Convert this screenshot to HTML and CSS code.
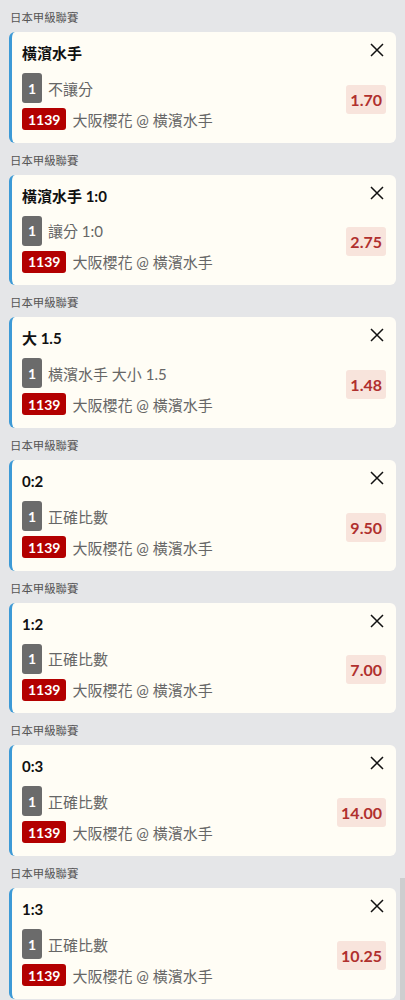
FILE: index.html
```html
<!DOCTYPE html>
<html lang="zh-Hant">
<head>
  <meta charset="UTF-8" />
  <meta name="viewport" content="width=device-width, initial-scale=1" />
  <title>投注單</title>
  <link rel="stylesheet" href="styles.css">
</head>
<body>

  <div class="slip">

    <div class="league">日本甲級聯賽</div>
    <div class="bet">
      <div class="bet-top">
        <div class="bet-title">橫濱水手</div>
        <svg class="close" width="14" height="14" viewBox="0 0 14 14"><path d="M1 1L13 13M13 1L1 13" stroke="#111" stroke-width="1.5" fill="none"/></svg>
      </div>
      <div class="bet-body">
        <div class="bet-info">
          <div class="row"><span class="num">1</span><span class="txt">不讓分</span></div>
          <div class="row"><span class="code">1139</span><span class="txt">大阪櫻花 @ 橫濱水手</span></div>
        </div>
        <div class="odds">1.70</div>
      </div>
    </div>

    <div class="league">日本甲級聯賽</div>
    <div class="bet">
      <div class="bet-top">
        <div class="bet-title">橫濱水手 1:0</div>
        <svg class="close" width="14" height="14" viewBox="0 0 14 14"><path d="M1 1L13 13M13 1L1 13" stroke="#111" stroke-width="1.5" fill="none"/></svg>
      </div>
      <div class="bet-body">
        <div class="bet-info">
          <div class="row"><span class="num">1</span><span class="txt">讓分 1:0</span></div>
          <div class="row"><span class="code">1139</span><span class="txt">大阪櫻花 @ 橫濱水手</span></div>
        </div>
        <div class="odds">2.75</div>
      </div>
    </div>

    <div class="league">日本甲級聯賽</div>
    <div class="bet">
      <div class="bet-top">
        <div class="bet-title">大 1.5</div>
        <svg class="close" width="14" height="14" viewBox="0 0 14 14"><path d="M1 1L13 13M13 1L1 13" stroke="#111" stroke-width="1.5" fill="none"/></svg>
      </div>
      <div class="bet-body">
        <div class="bet-info">
          <div class="row"><span class="num">1</span><span class="txt">橫濱水手 大小 1.5</span></div>
          <div class="row"><span class="code">1139</span><span class="txt">大阪櫻花 @ 橫濱水手</span></div>
        </div>
        <div class="odds">1.48</div>
      </div>
    </div>

    <div class="league">日本甲級聯賽</div>
    <div class="bet">
      <div class="bet-top">
        <div class="bet-title">0:2</div>
        <svg class="close" width="14" height="14" viewBox="0 0 14 14"><path d="M1 1L13 13M13 1L1 13" stroke="#111" stroke-width="1.5" fill="none"/></svg>
      </div>
      <div class="bet-body">
        <div class="bet-info">
          <div class="row"><span class="num">1</span><span class="txt">正確比數</span></div>
          <div class="row"><span class="code">1139</span><span class="txt">大阪櫻花 @ 橫濱水手</span></div>
        </div>
        <div class="odds">9.50</div>
      </div>
    </div>

    <div class="league">日本甲級聯賽</div>
    <div class="bet">
      <div class="bet-top">
        <div class="bet-title">1:2</div>
        <svg class="close" width="14" height="14" viewBox="0 0 14 14"><path d="M1 1L13 13M13 1L1 13" stroke="#111" stroke-width="1.5" fill="none"/></svg>
      </div>
      <div class="bet-body">
        <div class="bet-info">
          <div class="row"><span class="num">1</span><span class="txt">正確比數</span></div>
          <div class="row"><span class="code">1139</span><span class="txt">大阪櫻花 @ 橫濱水手</span></div>
        </div>
        <div class="odds">7.00</div>
      </div>
    </div>

    <div class="league">日本甲級聯賽</div>
    <div class="bet">
      <div class="bet-top">
        <div class="bet-title">0:3</div>
        <svg class="close" width="14" height="14" viewBox="0 0 14 14"><path d="M1 1L13 13M13 1L1 13" stroke="#111" stroke-width="1.5" fill="none"/></svg>
      </div>
      <div class="bet-body">
        <div class="bet-info">
          <div class="row"><span class="num">1</span><span class="txt">正確比數</span></div>
          <div class="row"><span class="code">1139</span><span class="txt">大阪櫻花 @ 橫濱水手</span></div>
        </div>
        <div class="odds">14.00</div>
      </div>
    </div>

    <div class="league">日本甲級聯賽</div>
    <div class="bet">
      <div class="bet-top">
        <div class="bet-title">1:3</div>
        <svg class="close" width="14" height="14" viewBox="0 0 14 14"><path d="M1 1L13 13M13 1L1 13" stroke="#111" stroke-width="1.5" fill="none"/></svg>
      </div>
      <div class="bet-body">
        <div class="bet-info">
          <div class="row"><span class="num">1</span><span class="txt">正確比數</span></div>
          <div class="row"><span class="code">1139</span><span class="txt">大阪櫻花 @ 橫濱水手</span></div>
        </div>
        <div class="odds">10.25</div>
      </div>
    </div>

  </div>

  <!-- scroll thumb -->
  <div class="scroll-thumb"></div>

</body>
</html>
```

FILE: styles.css
```css
body {
  margin: 0;
  background: #e5e6e8;
  font-family: Lato, "Noto Sans CJK TC", sans-serif;
  color: #111;
}

.slip {
  padding: 0 9px;
}

/* league header */
.league {
  font-size: 11.4px;
  line-height: 15px;
  color: #555;
  padding: 10px 1px 7px;
}

/* bet card */
.bet {
  background: #fffdf5;
  border-left: 3px solid #3d9ad6;
  border-radius: 6px;
  padding: 11px 10px 12.7px 10px;
}

.bet-top {
  display: flex;
  justify-content: space-between;
  align-items: flex-start;
}

.bet-title {
  font-size: 15px;
  font-weight: 700;
  line-height: 21px;
}

.close {
  margin-right: 2px;
  flex-shrink: 0;
}

.bet-body {
  display: flex;
  justify-content: space-between;
  align-items: center;
  margin-top: 9px;
}

.bet-info {
  display: flex;
  flex-direction: column;
  gap: 5px;
}

.row {
  display: flex;
  align-items: center;
}

.num {
  width: 20px;
  height: 30px;
  display: flex;
  align-items: center;
  justify-content: center;
  background: #6b6b6b;
  color: #fff;
  font-size: 14px;
  font-weight: 700;
  border-radius: 3px;
}

.code {
  height: 22px;
  padding: 0 6px;
  display: flex;
  align-items: center;
  background: #b30000;
  color: #fff;
  font-size: 14px;
  font-weight: 700;
  border-radius: 3px;
}

.txt {
  font-size: 15px;
  color: #666;
  margin-left: 6px;
}

.odds {
  background: #f8e4dc;
  color: #b0302e;
  font-size: 16px;
  font-weight: 700;
  line-height: 29px;
  padding: 0 4px;
  border-radius: 3px;
  margin-bottom: 5px;
}

.scroll-thumb {
  position: fixed;
  right: 0;
  top: 878px;
  width: 5px;
  height: 122px;
  background: #cdcecf;
}
```
